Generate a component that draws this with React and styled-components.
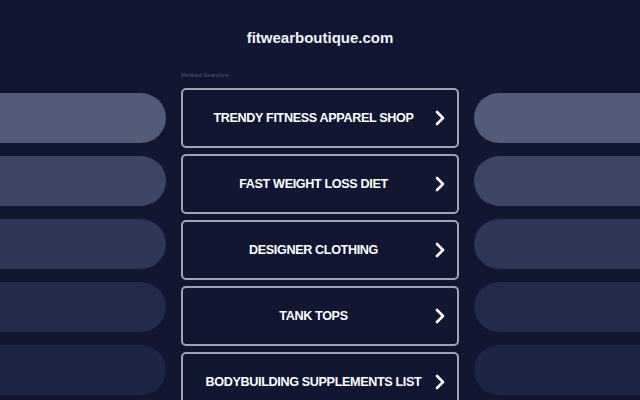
import React from 'react'
import styled, { createGlobalStyle } from 'styled-components';

const GlobalStyle = createGlobalStyle`
  html, body {
    margin: 0;
    padding: 0;
    background: #111730;
    font-family: "Liberation Sans", Arial, sans-serif;
    overflow: hidden;
  }
`;

const Page = styled.div`
  width: 640px;
  height: 400px;
  overflow: hidden;
  background: #111730;
  display: flex;
  flex-direction: column;
`;

const Header = styled.h1`
  margin: 0;
  padding-top: 29px;
  height: 41px;
  box-sizing: border-box;
  text-align: center;
  color: #f2f3f7;
  font-size: 15px;
  font-weight: 700;
  line-height: 18px;
`;

const Grid = styled.div`
  display: grid;
  grid-template-columns: 166px 278px 1fr;
  column-gap: 15px;
  padding-top: 30px;
`;

const Side = styled.div`
  display: flex;
  flex-direction: column;
  gap: 13px;
  padding-top: 22px;
  align-items: ${props => props.right ? 'flex-start' : 'flex-end'};
`;

const Pill = styled.div`
  width: 240px;
  height: 50px;
  background: ${props => props.color};
  border-radius: ${props => props.right ? '25px 0 0 25px' : '0 25px 25px 0'};
`;

const Middle = styled.div`
  display: flex;
  flex-direction: column;
`;

const Label = styled.div`
  color: #4e5573;
  font-size: 6px;
  line-height: 8px;
  height: 17px;
`;

const List = styled.div`
  display: flex;
  flex-direction: column;
  gap: 6px;
`;

const Button = styled.a`
  position: relative;
  display: flex;
  align-items: center;
  justify-content: center;
  height: 60px;
  box-sizing: border-box;
  border: 2px solid #9fa3b3;
  border-radius: 5px;
  background: #111730;
  padding-right: 13px;
  color: #ffffff;
  font-size: 12.6px;
  letter-spacing: -0.35px;
  font-weight: 700;
  text-decoration: none;
`;

const Chevron = styled.svg`
  position: absolute;
  right: 11px;
  top: 50%;
  margin-top: -8px;
`;

const pillColors = ['#525b78', '#3d4564', '#2e3657', '#232b4b', '#1d2545'];

const searches = [
  'TRENDY FITNESS APPAREL SHOP',
  'FAST WEIGHT LOSS DIET',
  'DESIGNER CLOTHING',
  'TANK TOPS',
  'BODYBUILDING SUPPLEMENTS LIST',
];

const App = () => {
  return (
    <Page>
      <GlobalStyle />
      <Header>fitwearboutique.com</Header>
      <Grid>
        <Side>
          {pillColors.map((c, i) => <Pill key={i} color={c} />)}
        </Side>
        <Middle>
          <Label>Related Searches</Label>
          <List>
            {searches.map(s => (
              <Button key={s} href="#">
                {s}
                <Chevron width="12" height="16" viewBox="0 0 12 16">
                  <path d="M3 2 L9 8 L3 14" fill="none" stroke="#fff" strokeWidth="2.6" strokeLinecap="round" strokeLinejoin="round" />
                </Chevron>
              </Button>
            ))}
          </List>
        </Middle>
        <Side right>
          {pillColors.map((c, i) => <Pill key={i} color={c} right />)}
        </Side>
      </Grid>
    </Page>
  )
}

export default App
